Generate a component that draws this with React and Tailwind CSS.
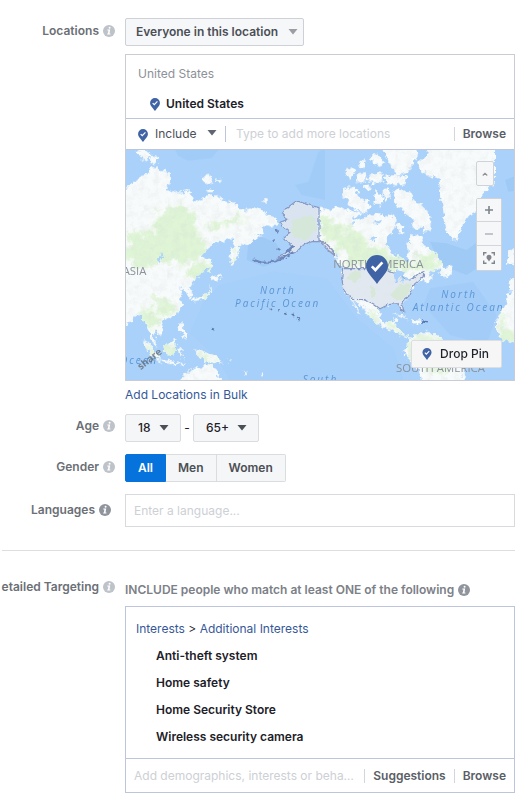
import { useState } from "react";

function InfoIcon({ dark }) {
  return (
    <svg viewBox="0 0 12 12" className={`size-3 shrink-0 ${dark ? "text-[#90949c]" : "text-[#bec2c9]"}`} aria-hidden="true">
      <circle cx="6" cy="6" r="6" fill="currentColor" />
      <path d="M6.6 1.700a1 1 0 1 1 0 2 1 1 0 0 1 0-2ZM4.300 4.600h2.900L6.500 8.600h.9v1H4.200v-1h.7l.5-3H4.300Z" fill="#fff" />
    </svg>
  );
}

function PinIcon({ className }) {
  return (
    <svg viewBox="0 0 22 29" className={className} aria-hidden="true">
      <path d="M11 0a11 11 0 0 1 11 11c0 6.400-6 10.500-11 18C6 21.500 0 17.400 0 11A11 11 0 0 1 11 0Z" fill="#4063a5" />
      <path d="m5.800 11.300 3.600 3.700 7-7.600" fill="none" stroke="#fff" strokeWidth="2.600" />
    </svg>
  );
}

function Caret({ className }) {
  return (
    <svg viewBox="0 0 10 6" className={`pointer-events-none absolute h-1.5 w-2.5 ${className}`} aria-hidden="true">
      <path d="M.5 0h9L5 5.500Z" fill="currentColor" />
    </svg>
  );
}

function Row({ label, htmlFor, dark, className = "", labelClass = "pt-1.5", children }) {
  return (
    <div className={`grid grid-cols-[113px_minmax(0,1fr)] gap-x-2.5 ${className}`}>
      <div className={`flex items-start justify-end ${labelClass}`}>
        <div className="flex items-center gap-1">
          <label htmlFor={htmlFor} className="whitespace-nowrap font-semibold text-[#6b6f76]">
            {label}
          </label>
          <InfoIcon dark={dark} />
        </div>
      </div>
      <div className="min-w-0">{children}</div>
    </div>
  );
}

const asia =
  "M0 140 35 118 45 105 60 98 75 90 88 78 100 66 112 64 118 78 135 78 150 90 148 110 140 135 160 140 185 142 205 136 216 142 218 165 235 170 262 152 290 150 320 170 345 174 350 190 380 195 410 188 435 200 450 212 470 220 474 240 455 248 440 240 430 250 435 266 420 268 400 280 395 295 375 300 362 292 358 325 345 350 335 362 328 335 335 310 345 290 330 280 310 290 290 292 265 310 250 325 245 340 272 338 276 356 262 366 240 392 225 401 205 426 218 446 214 460 205 456 195 436 175 426 188 441 180 461 188 481 175 501 155 516 130 523 125 536 132 556 118 573 105 556 97 566 112 606 95 591 85 556 75 536 60 511 50 506 35 526 0 551Z";
const america =
  "M598 188 630 195 650 185 680 195 710 200 730 215 770 205 800 215 815 205 830 225 826 250 805 272 798 300 818 325 845 340 862 355 866 330 865 300 870 270 900 275 912 300 940 320 962 350 975 371 945 372 925 384 942 392 922 412 905 404 885 416 875 431 865 456 845 471 852 501 843 492 835 476 805 479 780 491 778 516 792 536 812 530 832 521 828 543 842 553 852 572 875 580 885 566 905 562 930 561 955 573 985 611 1022 628 1032 660 1030 720 905 720 896 671 865 641 852 621 866 582 828 562 795 548 765 532 742 506 722 481 697 465 722 502 712 498 690 456 672 436 665 401 668 371 650 341 640 318 618 296 598 288Z";
const greenland =
  "M890 55 910 40 930 10 1125 10 1125 110 1105 125 1080 160 1062 205 1040 220 1018 260 1012 285 995 285 978 250 970 200 962 150 955 100 930 95 900 75Z";
const alaska =
  "M500 190 530 167 560 178 597 188V290L575 290 550 300 530 320 500 332 470 342 495 324 518 308 505 293 490 278 510 262 490 245 480 232 500 224 487 205Z";
const usa =
  "M668 371 790 371 812 378 830 384 850 398 866 405 885 398 900 384 912 380 909 396 885 416 875 431 865 456 845 471 852 501 843 492 835 476 805 479 780 491 760 476 735 464 697 463 672 436 665 401Z";
const islands = [
  "M52 15 88 15 92 36 76 46 58 32Z",
  "M94 28 110 40 114 52 96 58 90 48Z",
  "M248 95 275 92 284 108 265 118 248 112Z",
  "M288 100 304 104 304 114 294 112ZM262 132 274 134 272 142 260 140ZM428 166 440 166 440 174 428 174Z",
  "M665 130 700 125 712 142 722 165 742 165 750 190 730 210 710 195 690 182 680 165 664 155Z",
  "M680 75 700 65 706 80 692 98 676 92ZM718 50 732 46 732 64 718 68ZM742 95 760 84 788 86 790 108 760 116 744 110ZM752 28 770 28 796 54 780 62 756 48Z",
  "M710 90 734 84 740 104 722 116 708 106ZM728 124 748 122 752 132 734 134Z",
  "M790 10 895 10 886 45 872 70 858 85 830 90 816 72 802 40Z",
  "M796 92 830 90 860 96 858 116 830 122 800 116ZM790 132 810 130 812 156 796 166ZM762 138 788 146 786 180 768 180Z",
  "M816 140 845 132 870 140 885 165 905 185 926 205 937 230 928 260 908 258 912 240 890 250 872 244 880 225 858 210 850 192 826 184Z",
  "M830 235 850 240 848 262 832 258ZM962 372 990 362 998 378 975 396 958 388Z",
  "M270 391 285 393 302 389 295 403 275 409ZM268 413 270 436 257 451 235 456 218 461 216 469 238 466 262 457 273 436ZM267 345 274 342 276 388 270 380Z",
  "M178 532 188 532 190 552 204 572 205 584 192 580 180 558Z",
  "M128 604 150 596 166 582 170 600 162 628 138 628ZM68 584 86 594 118 632 116 646 98 634 76 604ZM112 642 150 648 190 654 190 660 130 654ZM174 612 190 612 182 622 190 640 178 634Z",
  "M222 612 250 620 285 632 310 654 278 650 250 648 236 632ZM176 706 200 684 222 664 240 672 256 656 264 664 275 654 298 690 302 720 170 720Z",
  "M818 506 842 508 872 524 846 518ZM876 526 904 526 906 534 876 536ZM1165 405 1190 400 1190 440 1168 438Z",
  "M1190 440 1168 444 1160 470 1140 501 1124 541 1138 576 1165 590 1190 592Z",
  "M1166 320 1184 304 1184 356 1160 360ZM418 680 432 684 424 692ZM320 640 335 652 326 650ZM374 678 384 694 376 692Z",
];

function WorldMap() {
  return (
    <svg viewBox="18 15 1164 690" preserveAspectRatio="xMidYMid slice" className="block h-[230px] w-full" role="img" aria-label="World map">
      <defs>
        <filter id="coast" x="-5%" y="-5%" width="110%" height="110%">
          <feTurbulence type="fractalNoise" baseFrequency="0.07" numOctaves="3" seed="4" result="n" />
          <feDisplacementMap in="SourceGraphic" in2="n" scale="24" xChannelSelector="R" yChannelSelector="G" />
        </filter>
        <filter id="outline" x="-5%" y="-5%" width="110%" height="110%">
          <feTurbulence type="fractalNoise" baseFrequency="0.08" numOctaves="2" seed="9" result="n" />
          <feDisplacementMap in="SourceGraphic" in2="n" scale="12" xChannelSelector="R" yChannelSelector="G" />
        </filter>
        <filter id="soft">
          <feTurbulence type="fractalNoise" baseFrequency="0.035" numOctaves="4" seed="2" result="n" />
          <feDisplacementMap in="SourceGraphic" in2="n" scale="70" xChannelSelector="R" yChannelSelector="G" result="d" />
          <feGaussianBlur in="d" stdDeviation="3" />
        </filter>
        <filter id="relief" x="0" y="0" width="100%" height="100%">
          <feTurbulence type="fractalNoise" baseFrequency="0.05" numOctaves="4" seed="7" />
          <feColorMatrix values="0 0 0 0 .6  0 0 0 0 .64  0 0 0 0 .66  0 1.600 0 0 -.66" />
        </filter>
        <clipPath id="land">
          <path d={asia + america + greenland + islands.join("")} />
        </clipPath>
      </defs>
      <rect width="1200" height="720" fill="#a9d1fa" />
      <g fill="#a0caf6">
        <path d="M165 15h130l-20 24-70 8-30-14ZM1060 15ZM525 120l40-10 30-90 10-5 10 0v150l-70-15Z" opacity=".7" />
        <path d="M385 290l40-15 45 20 20 50-60 20-50-20ZM930 290l50 5 60 20 60-45 30 60-90 60-80-30ZM1155 105l30-12v45l-20 2Z" />
        <path d="M300 420l160-40 160 20 90 120 110 90 30 95H330l-40-70-80-70 40-90Z" opacity=".35" />
        <path d="M930 430l130-20 70 100-30 90-110-30-80-90Z" opacity=".6" />
      </g>
      <g filter="url(#coast)">
        <g fill="#f8fbfb">
          <path d={asia} />
          <path d={america} />
          <path d={greenland} />
          {islands.map((d, i) => (
            <path key={i} d={d} />
          ))}
        </g>
        <g clipPath="url(#land)">
          <g filter="url(#soft)" fill="#dff5d6">
            <path d="M100 205 165 185 210 195 225 240 250 290 265 310 235 350 190 355 100 350 60 370 20 340 20 270 70 260 105 245Z" />
            <path d="M255 235 300 225 350 215 370 225 330 245 280 252ZM330 300l20-5 5 30-15 30ZM205 385l40-30 30 5-20 50-30 20Z" />
            <path d="M60 490l35 10 20 40-20 30-30-50ZM90 455l60 15 25 25-40 20ZM135 595h30v32h-30ZM235 618l50 15 15 18-50-5ZM75 590l30 30 10 24-25-20ZM235 455l35-20-5 25Z" />
            <path d="M598 210 650 230 700 265 750 295 800 315 860 350 940 330 970 370 880 380 700 370 640 300 600 260Z" />
            <path d="M725 500l40 10 20 40-25-5ZM800 535l50 10 10 30-50-20ZM870 570l100 10 50 50-20 50h-90l-50-60Z" opacity=".8" />
            <path d="M1140 480l20 60-20 30ZM1130 560h60v30h-50Z" />
          </g>
          <rect width="1200" height="720" filter="url(#relief)" opacity=".3" />
        </g>
        <g fill="#a9d1fa">
          <path d="M110 345l18-25 4 3-14 28ZM700 215l30-5 8 8-30 6ZM760 232l20-12 4 8-18 10ZM755 285l12-12 2 6-10 12ZM690 235l18-4-6 10Z" />
        </g>
      </g>
      <g filter="url(#outline)">
        <g fill="#dfe5ee" stroke="#8599c4" strokeWidth="3.500" strokeLinejoin="round">
          <path d={alaska} fillOpacity=".9" />
          <path d={usa} fillOpacity=".9" />
        </g>
        <path d="M598 286 616 293 640 318 640 328 620 312Z" fill="#dfe5ee" stroke="#8f98be" strokeWidth="4" />
        <g fill="#d4e7d2" opacity=".8">
          <path d="M520 225l60-15 12 40-30 35-40-10-10-25ZM690 385l25-10 10 20-20 20-25-15ZM810 450l30-30 35-5-15 40-30 12ZM750 425l15 5 5 20-15 10Z" />
        </g>
        <path d="M822 384l12-8 22 8-8 8 2 22-6-4-4-18-12 20-4-2ZM852 392l20 12-16 2Z" fill="#a9d1fa" />
        <path d="M398 344 424 353 450 353 480 343 520 322M466 254l10 6M460 284l2 4M474 310l6 8M500 322l20-20" fill="none" stroke="#6e87bc" strokeWidth="7" />
        <path d="M440 482l5 4M450 489l6 6M475 496l5 3M492 502l8 4M515 507l8 6M530 516l8 9" fill="none" stroke="#5f7ba6" strokeWidth="4" />
        <path d="M906 529l18 3M276 551l5 3" fill="none" stroke="#5777ae" strokeWidth="7" />
      </g>
      <g className="font-['Open_Sans',sans-serif]" fill="#8b929a" fontSize="34">
        <text x="8" y="389">ASIA</text>
        <text x="640" y="369">NORTH AMERICA</text>
        <text x="828" y="680">SOUTH AMERICA</text>
      </g>
      <g className="font-['Open_Sans',sans-serif] italic tracking-[0.2em]" fill="#5b96d6" fontSize="30">
        <text x="420" y="447">North</text>
        <text x="345" y="485">Pacific Ocean</text>
        <text x="964" y="458">North</text>
        <text x="878" y="497">Atlantic Ocean</text>
        <text x="548" y="714">South</text>
        <text x="0" y="656">Ocean</text>
      </g>
      <text className="font-['Open_Sans',sans-serif] font-bold" transform="translate(62 676) rotate(-38)" fill="#63676e" fillOpacity=".75" fontSize="30">
        share
      </text>
    </svg>
  );
}

const mapButton = "flex w-full items-center justify-center bg-[#f6f7f9] text-[#7f848d]";

function LocationPanel() {
  return (
    <div className="mt-2 border border-[#c9ccd4]">
      <div className="h-[63px] px-3 pt-2.5">
        <p className="leading-[18px] text-[#8d9198]">United States</p>
        <p className="mt-3 flex items-center gap-1.5 pl-3 font-semibold leading-[18px] text-[#1d2129]">
          <PinIcon className="h-[13px] w-2.5" />
          United States
        </p>
      </div>
      <div className="flex h-8 items-center border-y border-[#bcc5dc] pl-3 pr-2">
        <PinIcon className="mt-0.5 h-[13px] w-2.5" />
        <div className="relative ml-1.5">
          <select aria-label="Include or exclude" className="block w-[71px] appearance-none bg-transparent pl-px text-[#4b4f56] outline-none">
            <option>Include</option>
            <option>Exclude</option>
          </select>
          <Caret className="right-2 top-1 text-[#606671]" />
        </div>
        <div className="flex h-4 flex-1 items-center border-l border-[#bcc5dc] pl-2.5">
          <input aria-label="Add locations" placeholder="Type to add more locations" className="w-full bg-transparent outline-none placeholder:text-[#cdd0d5]" />
        </div>
        <button className="h-3.5 border-l border-[#d3d6db] pl-2 font-semibold leading-3.5 text-[#5a5e66]">Browse</button>
      </div>
      <div className="relative">
        <WorldMap />
        <PinIcon className="absolute left-1/2 top-[105px] ml-[46px] h-[29px] w-[22px]" />
        <button aria-label="Tilt" className="absolute right-5 top-[11px] flex h-[25px] w-[18px] items-center justify-center rounded-xs border border-[#cfd2d8] bg-[#f6f7f9]">
          <svg viewBox="0 0 8 5" className="h-1 w-1.5" aria-hidden="true">
            <path d="m1 4.500 3-3 3 3" fill="none" stroke="#8d9198" strokeWidth="1.500" />
          </svg>
        </button>
        <div className="absolute right-3 top-12 w-[26px] divide-y divide-[#d3d6db] rounded-xs border border-[#cfd2d8]">
          <button aria-label="Zoom in" className={`${mapButton} h-[23px]`}>
            <svg viewBox="0 0 8 8" className="size-2" aria-hidden="true">
              <path d="M0 4h8M4 0v8" stroke="currentColor" strokeWidth="1.600" />
            </svg>
          </button>
          <button aria-label="Zoom out" className={`${mapButton} h-6`}>
            <svg viewBox="0 0 8 8" className="size-2" aria-hidden="true">
              <path d="M0 4h8" stroke="#b0b4bb" strokeWidth="1.500" />
            </svg>
          </button>
          <button aria-label="Fit to selection" className={`${mapButton} h-6`}>
            <svg viewBox="0 0 12 12" className="size-3" aria-hidden="true">
              <path d="M.7 3.500V.7h2.800M8.500.7h2.800v2.800M11.300 8.500v2.800H8.500M3.500 11.300H.7V8.500" fill="none" stroke="currentColor" strokeWidth="1.400" />
              <path d="M6 2.800a2.500 2.500 0 0 1 2.500 2.500C8.500 7 7 7.800 6 9.400 5 7.800 3.500 7 3.500 5.300A2.500 2.500 0 0 1 6 2.800Z" fill="currentColor" />
            </svg>
          </button>
        </div>
        <button className="absolute bottom-3 right-3 flex h-7 items-center gap-2 rounded-xs border border-[#dcdee2] bg-[#f6f6f7] pl-2.5 pr-3 font-medium text-[#1d2129]">
          <PinIcon className="h-3 w-2.5" />
          Drop Pin
        </button>
      </div>
    </div>
  );
}

function AgeSelect({ id, label, value, options, width }) {
  return (
    <div className="relative">
      <select
        id={id}
        aria-label={label}
        defaultValue={value}
        className={`block h-7 appearance-none rounded-xs border border-[#dadce0] bg-[#f5f6f7] pl-3 font-medium text-[#1d2129] outline-none ${width}`}
      >
        {options.map((o) => (
          <option key={o}>{o}</option>
        ))}
      </select>
      <Caret className="right-3 top-[11px] text-[#4b4f56]" />
    </div>
  );
}

const interests = ["Anti-theft system", "Home safety", "Home Security Store", "Wireless security camera"];

export default function App() {
  const [gender, setGender] = useState("All");
  return (
    <main className="bg-white pb-3.5 pl-0.5 pr-[17px] pt-[18px] font-['Inter','Liberation_Sans',sans-serif] text-xs leading-4 text-[#1d2129]">
      <Row label="Locations" htmlFor="location-type" labelClass="pt-[5px]">
        <div className="relative w-[179px]">
          <select
            id="location-type"
            className="block h-7 w-full appearance-none rounded-xs border border-[#cdd0d6] bg-[#f6f7f9] pl-2.5 font-semibold text-[#4b4f56] outline-none"
          >
            <option>Everyone in this location</option>
            <option>People who live in this location</option>
          </select>
          <Caret className="right-1.5 top-[11px] text-[#9a9da3]" />
        </div>
        <LocationPanel />
        <a href="#bulk" className="mt-1.5 block w-fit leading-4 text-[#365899]">
          Add Locations in Bulk
        </a>
      </Row>

      <Row label="Age" htmlFor="age-min" className="mt-[11px]" labelClass="pt-1">
        <div className="flex items-center">
          <AgeSelect id="age-min" label="Minimum age" value="18" options={["13", "18", "21"]} width="w-14" />
          <span className="w-3 text-center">-</span>
          <AgeSelect id="age-max" label="Maximum age" value="65+" options={["45", "55", "65+"]} width="w-[66px]" />
        </div>
      </Row>

      <Row label="Gender" htmlFor="gender-all" className="mt-3" labelClass="pt-[5px]">
        <div className="flex h-7 w-fit font-semibold">
          {["All", "Men", "Women"].map((g) => (
            <button
              key={g}
              id={`gender-${g.toLowerCase()}`}
              onClick={() => setGender(g)}
              aria-pressed={gender === g}
              className={`border-y border-r px-3 first:rounded-l-xs first:border-l last:rounded-r-xs ${
                gender === g ? "border-[#0573db] bg-[#0573db] text-white" : "border-[#dadce0] bg-[#f5f6f7] text-[#4b4f56]"
              }`}
            >
              {g}
            </button>
          ))}
        </div>
      </Row>

      <Row label="Languages" htmlFor="languages" dark className="mt-3" labelClass="pr-1 pt-2">
        <input
          id="languages"
          placeholder="Enter a language..."
          className="block h-[33px] w-full border border-[#d8dade] px-2 outline-none placeholder:text-[#cdd0d5]"
        />
      </Row>

      <hr className="mt-[23px] border-[#dcdee2]" />

      <Row label="etailed Targeting" htmlFor="targeting" className="mt-7" labelClass="">
        <h2 className="mt-[3px] flex items-center gap-1 whitespace-nowrap font-semibold leading-4 text-[#7c8087]">
          INCLUDE people who match at least ONE of the following
          <InfoIcon dark />
        </h2>
        <div className="mt-2 border border-[#bcc5dc]">
          <div className="px-2.5 pb-2 pt-2 leading-[27px]">
            <p>
              <a href="#interests" className="text-[#365899]">Interests</a> &gt;{" "}
              <a href="#additional" className="text-[#365899]">Additional Interests</a>
            </p>
            <ul className="pl-5 font-semibold">
              {interests.map((name) => (
                <li key={name}>{name}</li>
              ))}
            </ul>
          </div>
          <div className="flex h-[34px] items-center border-t border-[#bcc5dc] pl-2 pr-2">
            <input
              id="targeting"
              placeholder="Add demographics, interests or behaviors"
              className="min-w-0 flex-1 text-ellipsis bg-transparent outline-none placeholder:text-[#cdd0d5]"
            />
            <button className="ml-2 h-3.5 border-l border-[#d3d6db] px-2 font-semibold leading-3.5 text-[#5a5e66]">Suggestions</button>
            <button className="h-3.5 border-l border-[#d3d6db] pl-2 font-semibold leading-3.5 text-[#5a5e66]">Browse</button>
          </div>
        </div>
      </Row>
    </main>
  );
}
